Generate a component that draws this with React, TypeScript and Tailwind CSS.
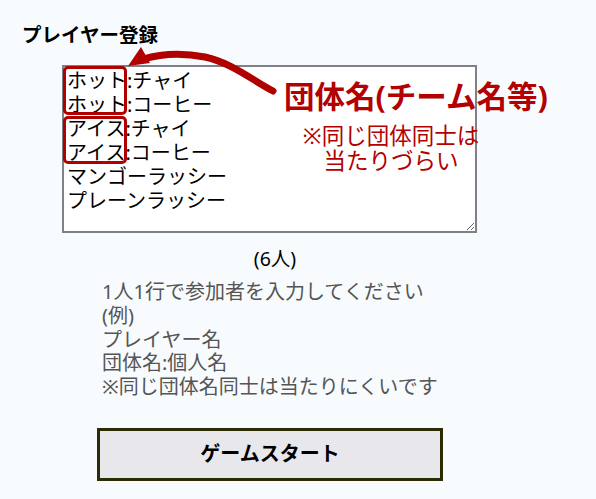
import React from "react";

const lines = [
  "ホット:チャイ",
  "ホット:コーヒー",
  "アイス:チャイ",
  "アイス:コーヒー",
  "マンゴーラッシー",
  "プレーンラッシー",
];

const font = "font-['Noto_Sans','Noto_Sans_CJK_JP',sans-serif]";

const App = () => {
  return (
    <div className={`relative min-h-screen bg-[#f8fbfd] text-black ${font}`}>
      {/* タイトル */}
      <div className="pl-[22px] pt-[23px]">
        <h2 className="text-[19.5px] font-bold leading-[24px]">プレイヤー登録</h2>
      </div>

      {/* 入力欄 */}
      <div className="ml-[62px] mt-[18px] w-[415px]">
        <textarea
          readOnly
          defaultValue={lines.join("\n")}
          className={`block h-[168px] w-[415px] border-2 border-[#80808a] bg-white px-[3px] pt-[2px] text-[20px] leading-[24px] text-black outline-none ${font}`}
        />
        <p className="mt-[14px] text-center text-[19.5px] leading-[24px] pl-[11px]">(6人)</p>
      </div>

      {/* 説明 */}
      <div className="ml-[102px] mt-[9px] text-[20px] leading-[23.8px] text-[#555]">
        <p>1人1行で参加者を入力してください</p>
        <p>(例)</p>
        <p>プレイヤー名</p>
        <p>団体名:個人名</p>
        <p>※同じ団体名同士は当たりにくいです</p>
      </div>

      <div className="ml-[97px] mt-[29px]">
        <button className="flex h-[53px] w-[346px] items-center justify-center border-[3px] border-[#2b2b06] bg-[#e8e8ec] text-[20px] font-bold">
          ゲームスタート
        </button>
      </div>

      {/* 注釈 */}
      <div className="absolute left-[63px] top-[66px] h-[49px] w-[64px] rounded-[5px] border-[3px] border-[#b00000]" />
      <div className="absolute left-[63px] top-[116px] h-[48px] w-[64px] rounded-[5px] border-[3px] border-[#b00000]" />

      <svg className="absolute left-0 top-0" width="596" height="499" viewBox="0 0 596 499" fill="none">
        <path
          d="M273 91 C 252 80, 232 63, 205 57 C 180 52, 160 54, 143 59"
          stroke="#b00000"
          strokeWidth="7"
          strokeLinecap="round"
        />
        <polygon points="128,66 141,47 150,63" fill="#b00000" />
      </svg>

      <div className="absolute left-[284px] top-[76px] text-[30.5px] font-bold leading-[40px] text-[#b30000]">
        団体名(チーム名等)
      </div>
      <div className="absolute left-[296px] top-[123px] w-[190px] text-center text-[22.5px] leading-[25px] text-[#b30000]">
        <p>※同じ団体同士は</p>
        <p>当たりづらい</p>
      </div>
    </div>
  );
};

export default App;
